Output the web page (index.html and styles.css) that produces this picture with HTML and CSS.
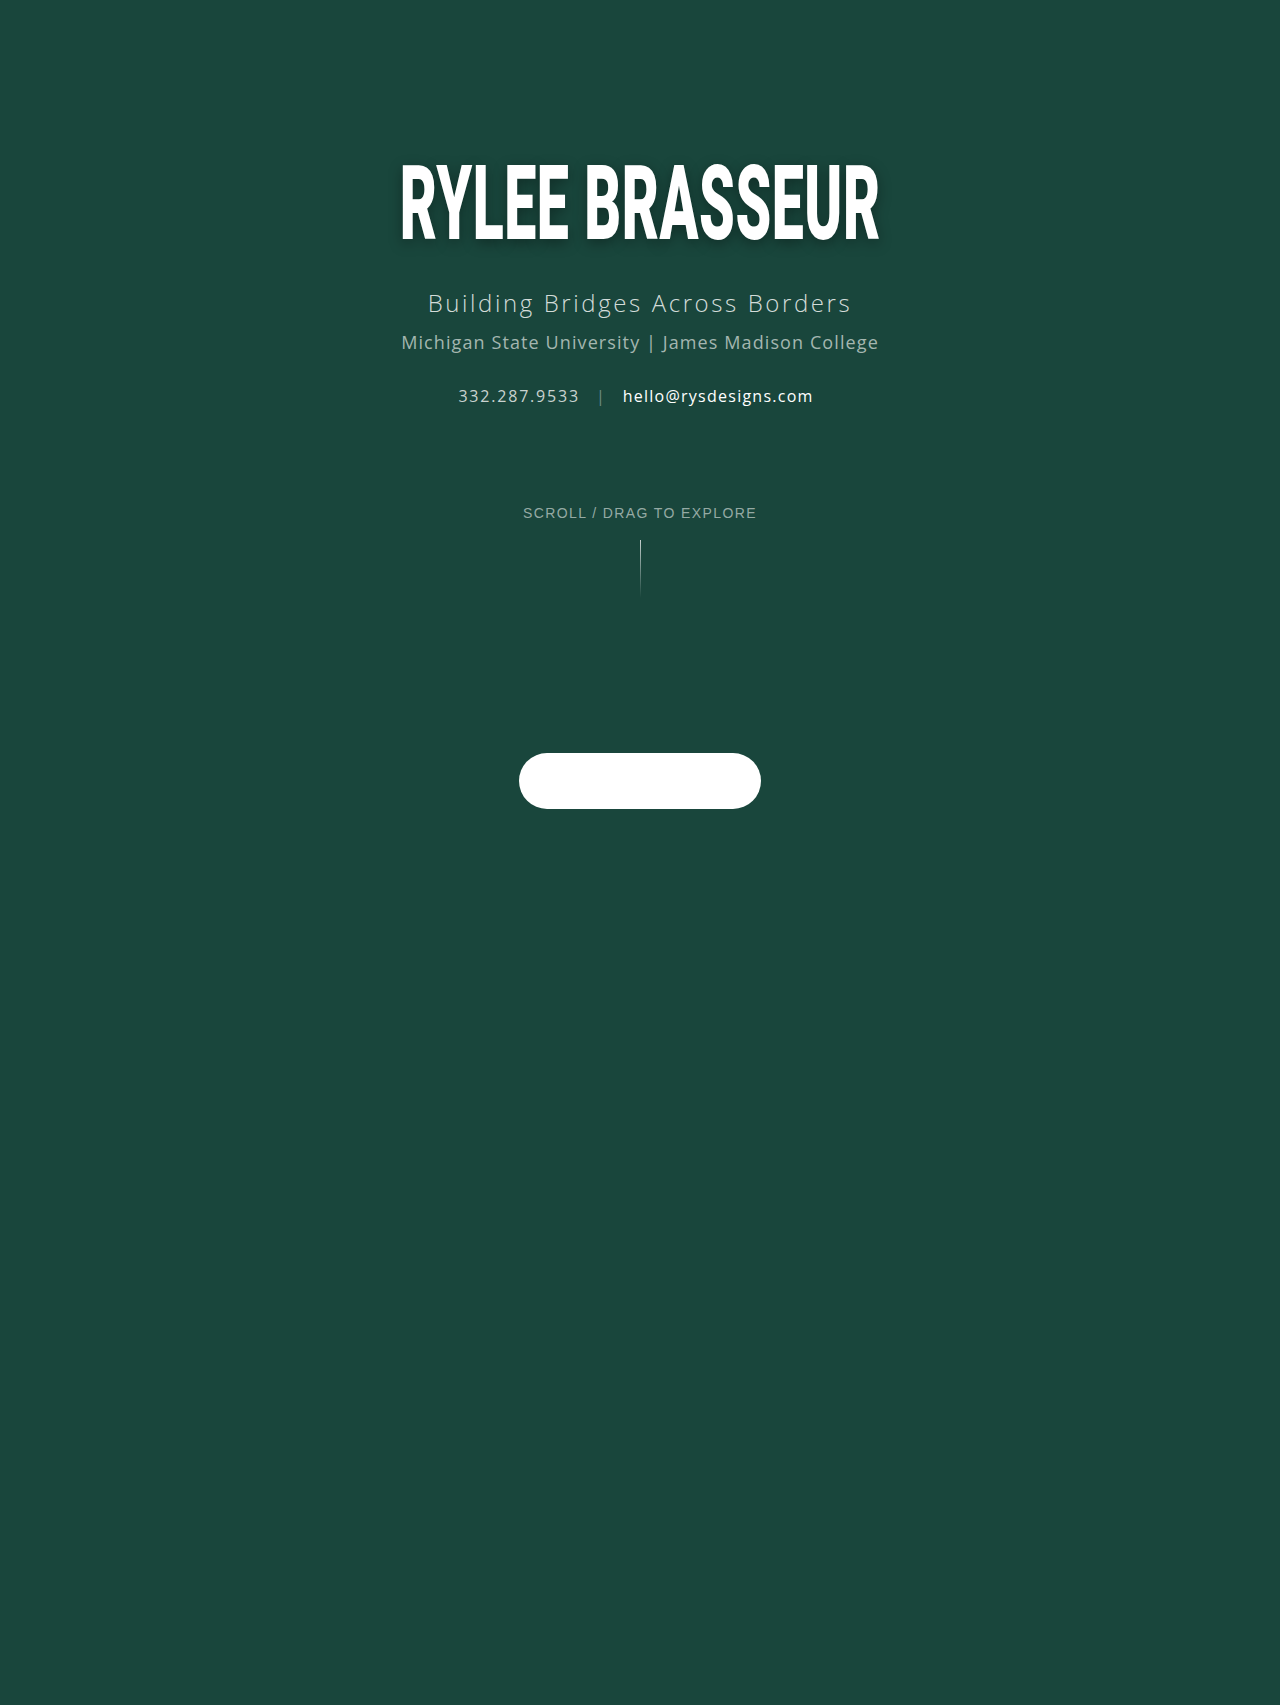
FILE: index.html
```html
<!DOCTYPE html>
<html lang="en">
<head>
<meta charset="utf-8">
<title>Rylee Brasseur</title>
<link rel="stylesheet" href="styles.css">
</head>
<body>
<main class="hero">
  <h1 class="name"><span class="name-inner">RYLEE BRASSEUR</span></h1>
  <p class="tagline">Building Bridges Across Borders</p>
  <p class="school">Michigan State University | James Madison College</p>
  <div class="contact">
    <span class="phone">332.287.9533</span>
    <span class="sep">|</span>
    <a class="email" href="#">hello@rysdesigns.com</a>
  </div>
  <p class="scroll-hint">SCROLL / DRAG TO EXPLORE</p>
  <div class="scroll-line"></div>
  <button class="pill" type="button" aria-label="Explore"></button>
</main>
</body>
</html>
```
FILE: styles.css
```css
html, body {
  margin: 0;
  padding: 0;
}
body {
  background: #19463c;
  min-height: 1705px;
  font-family: "Open Sans", "Noto Sans", sans-serif;
}
.hero {
  display: flex;
  flex-direction: column;
  align-items: center;
  padding-top: 152px;
}
.name {
  margin: 0;
  font-family: Roboto, "Liberation Sans", sans-serif;
  font-weight: 900;
  font-size: 104px;
  line-height: 1;
  color: #ffffff;
  text-shadow: 0 4px 18px rgba(0, 0, 0, 0.35);
  white-space: nowrap;
}
.name-inner {
  display: inline-block;
  transform: scaleX(0.55);
  letter-spacing: 1px;
}
.tagline {
  margin: 33px 0 0;
  font-size: 24px;
  line-height: 1.2;
  font-weight: 300;
  letter-spacing: 2.6px;
  color: #d3dcd9;
}
.school {
  margin: 14px 0 0;
  font-size: 18px;
  line-height: 1.2;
  font-weight: 400;
  letter-spacing: 1.1px;
  color: #a4b6b0;
}
.contact {
  margin-top: 34px;
  padding-right: 8px;
  display: flex;
  align-items: baseline;
  font-size: 16px;
  line-height: 1.2;
}
.phone { color: #c9d3d0; letter-spacing: 1.8px; margin-right: 16px; }
.sep { color: #6f8c84; margin-right: 18px; }
.email { color: #ffffff; text-decoration: none; letter-spacing: 1.25px; }
.scroll-hint {
  margin: 98px 0 0;
  font-family: "Liberation Sans", Arial, sans-serif;
  font-size: 14px;
  line-height: 1.2;
  letter-spacing: 1.4px;
  color: #95aaa4;
}
.scroll-line {
  margin-top: 19px;
  width: 1px;
  height: 58px;
  background: linear-gradient(to bottom, rgba(255,255,255,0.75), rgba(255,255,255,0));
}
.pill {
  margin-top: 155px;
  width: 242px;
  height: 56px;
  border: none;
  border-radius: 28px;
  background: #ffffff;
  padding: 0;
}
```
